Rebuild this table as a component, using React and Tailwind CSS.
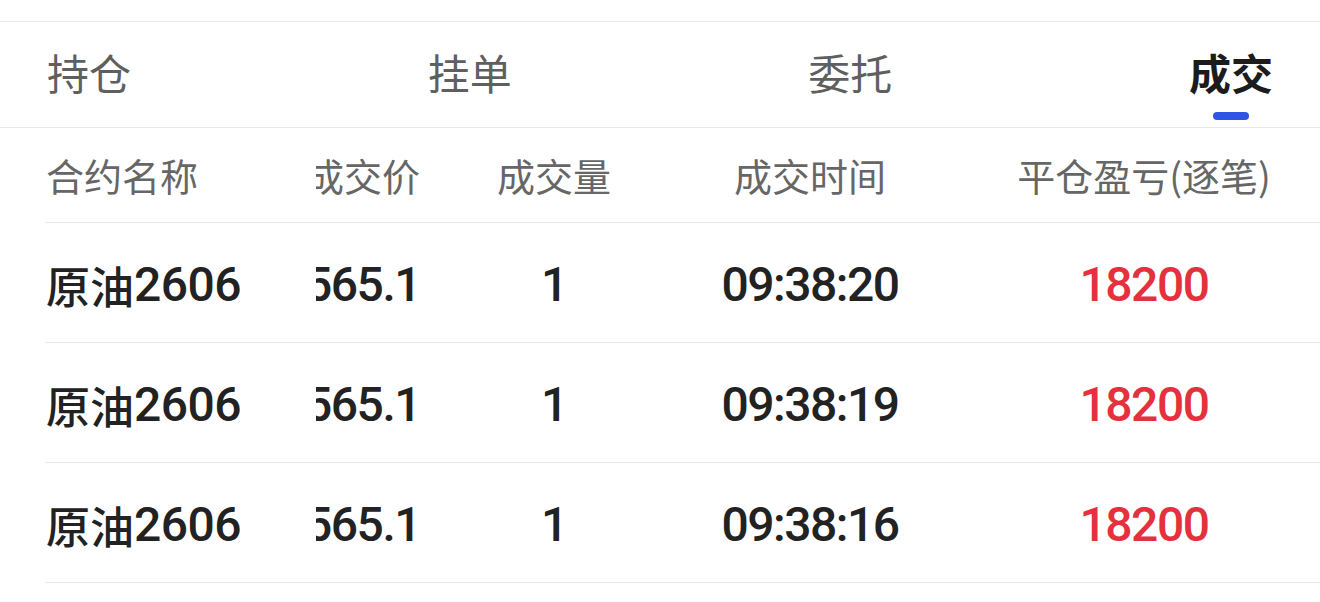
import React from "react";

const tabs = ["持仓", "挂单", "委托", "成交"];
const rows = [
  { name: "2606", price: "565.1", qty: "1", time: "09:38:20", pnl: "18200" },
  { name: "2606", price: "565.1", qty: "1", time: "09:38:19", pnl: "18200" },
  { name: "2606", price: "565.1", qty: "1", time: "09:38:16", pnl: "18200" },
];

const numFont = { fontFamily: 'Roboto, "Noto Sans CJK SC", sans-serif' };
const cjkFont = { fontFamily: '"Noto Sans CJK SC", "Noto Sans", sans-serif' };

export default function App() {
  return (
    <div className="w-[1320px] h-[602px] bg-white overflow-hidden" style={cjkFont}>
      <div className="h-[22px] border-b border-[#e9e9e9]" />
      <div className="h-[106px] border-b border-[#e9e9e9] flex justify-between px-[47px]">
        {tabs.map((t, i) => (
          <div key={t} className="relative flex items-center pb-[5px]">
            <span
              className={
                i === 3
                  ? "text-[42px] leading-none font-semibold text-[#1c1c1c]"
                  : "text-[42px] leading-none text-[#5f5f5f]"
              }
            >
              {t}
            </span>
            {i === 3 && (
              <div className="absolute bottom-[7px] left-1/2 -translate-x-1/2 w-[36px] h-[8px] rounded-full bg-[#2f55e4]" />
            )}
          </div>
        ))}
      </div>
      <div className="ml-[45px] h-[95px] border-b border-[#e9e9e9] flex items-center text-[38px] leading-[1.4] text-[#666666]">
        <div className="w-[271px] shrink-0 pl-[1px]">合约名称</div>
        <div className="flex-1 overflow-hidden">
          <div className="flex ml-[-20px]">
            <div className="w-[124px] shrink-0 text-right">成交价</div>
            <div className="w-[268px] shrink-0 text-center">成交量</div>
            <div className="w-[244px] shrink-0 text-center">成交时间</div>
            <div className="w-[424px] shrink-0 text-center">平仓盈亏(逐笔)</div>
          </div>
        </div>
      </div>
      {rows.map((r, idx) => (
        <div
          key={idx}
          className="ml-[45px] h-[120px] border-b border-[#e9e9e9] flex items-center pt-[5px] text-[#222222]"
          style={numFont}
        >
          <div className="w-[271px] shrink-0 flex items-center leading-none">
            <span className="text-[44px] leading-none pl-[1px] font-medium" style={cjkFont}>
              原油
            </span>
            <span className="text-[48px] leading-none tracking-[-0.5px] font-medium">{r.name}</span>
          </div>
          <div className="flex-1 overflow-hidden">
            <div className="flex ml-[-20px] text-[48px] leading-[1.3] tracking-[-1.5px] font-medium">
              <div className="w-[124px] shrink-0 text-right">{r.price}</div>
              <div className="w-[268px] shrink-0 text-center">{r.qty}</div>
              <div className="w-[244px] shrink-0 text-center">{r.time}</div>
              <div className="w-[424px] shrink-0 text-center text-[#e5303d]">{r.pnl}</div>
            </div>
          </div>
        </div>
      ))}
    </div>
  );
}
